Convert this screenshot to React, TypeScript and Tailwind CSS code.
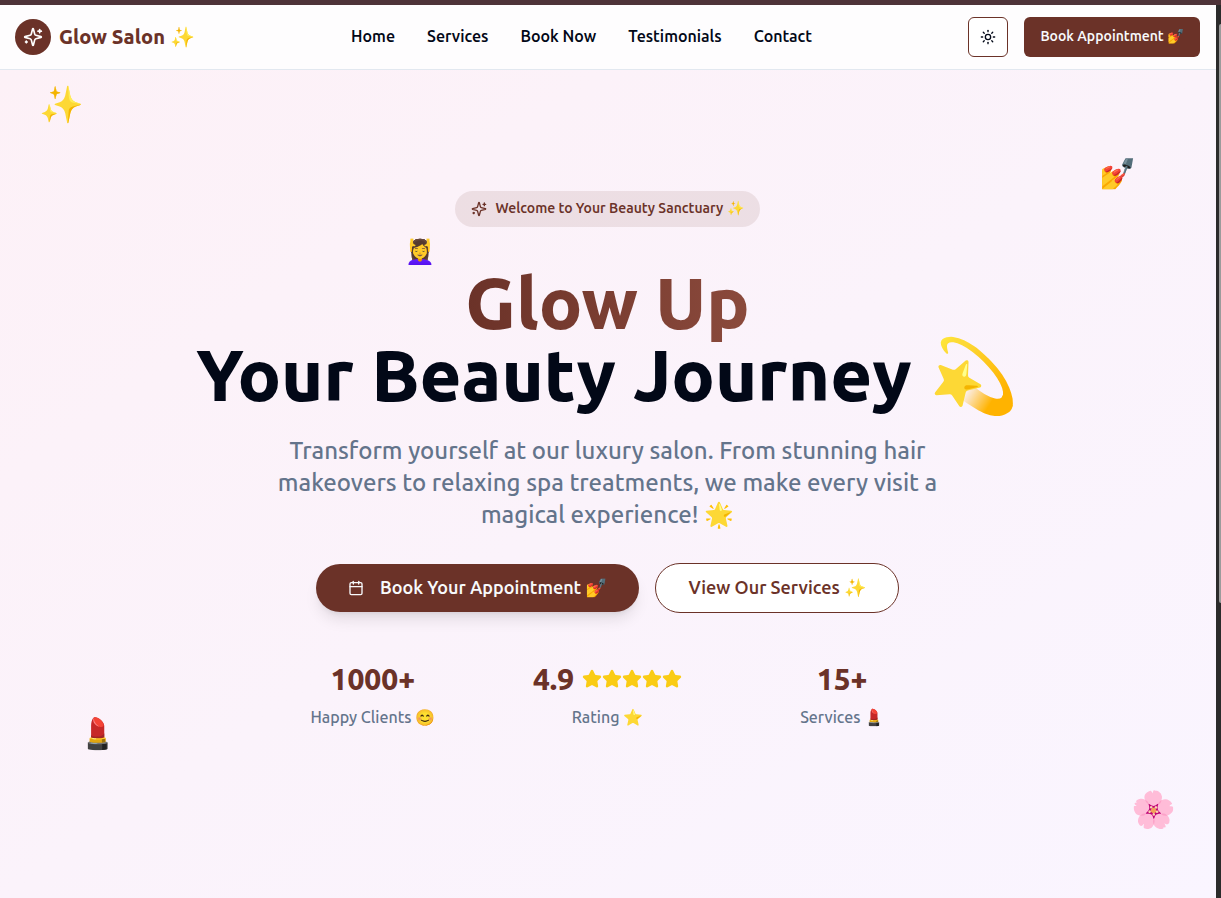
import React from "react";
import { Calendar, Star, Sun } from "lucide-react";

const links = [
  { label: "Home", href: "#home" },
  { label: "Services", href: "#services" },
  { label: "Book Now", href: "#book" },
  { label: "Testimonials", href: "#testimonials" },
  { label: "Contact", href: "#contact" },
];

function SparklesIcon({ className }: { className: string }) {
  return (
    <svg
      className={className}
      viewBox="0 0 24 24"
      fill="none"
      stroke="currentColor"
      strokeWidth="2"
      strokeLinecap="round"
      strokeLinejoin="round"
      aria-hidden="true"
    >
      <path d="M9.937 15.5A2 2 0 0 0 8.5 14.063l-6.135-1.582a.5.5 0 0 1 0-.962L8.5 9.936A2 2 0 0 0 9.937 8.5l1.582-6.135a.5.5 0 0 1 .963 0L14.063 8.5A2 2 0 0 0 15.5 9.937l6.135 1.581a.5.5 0 0 1 0 .964L15.5 14.063a2 2 0 0 0-1.437 1.437l-1.582 6.135a.5.5 0 0 1-.963 0z" />
      <path d="M20 3v4" />
      <path d="M22 5h-4" />
      <path d="M4 17v2" />
      <path d="M5 18H3" />
    </svg>
  );
}

function Header() {
  return (
    <header className="flex h-[65px] items-center justify-between border-b border-[#e2e8f0] bg-[#fefdfe] pr-4 pl-[15px]">
      <a href="#home" className="flex items-center gap-2">
        <span className="flex size-9 items-center justify-center rounded-full bg-[#6b3228] text-white">
          <SparklesIcon className="size-5" />
        </span>
        <span className="text-xl font-extrabold text-[#6b3228]">Glow Salon ✨</span>
      </a>
      <nav className="flex items-center gap-8 font-['Ubuntu_Sans','Noto_Sans',sans-serif]">
        {links.map((link) => (
          <a key={link.label} href={link.href} className="font-semibold text-[#020817]">
            {link.label}
          </a>
        ))}
      </nav>
      <div className="flex items-center gap-4 font-['Ubuntu_Sans','Noto_Sans',sans-serif]">
        <button
          type="button"
          aria-label="Toggle theme"
          className="flex size-10 items-center justify-center rounded-md border border-[#6b3228] bg-white text-[#020817]"
        >
          <Sun className="size-4" />
        </button>
        <button type="button" className="h-10 rounded-md bg-[#6b3228] px-4 text-sm font-semibold text-[#f8fafc]">
          Book Appointment 💅
        </button>
      </div>
    </header>
  );
}

function FloatingEmojis() {
  return (
    <div aria-hidden="true" className="pointer-events-none">
      <span className="absolute top-[14px] left-[39px] text-4xl">✨</span>
      <span className="absolute top-[85px] right-20 text-3xl">💅</span>
      <span className="absolute top-[166px] left-[405px] text-2xl">💆‍♀️</span>
      <span className="absolute bottom-[147px] left-[79px] text-3xl">💄</span>
      <span className="absolute right-10 bottom-[69px] text-4xl">🌸</span>
    </div>
  );
}

function Stat({ value, label, children }: { value: string; label: string; children?: React.ReactNode }) {
  return (
    <div className="text-center">
      <div className="mb-2 flex items-center justify-center gap-2 text-3xl font-extrabold text-[#6b3228]">
        {value}
        {children}
      </div>
      <div className="font-medium text-[#64748b]">{label}</div>
    </div>
  );
}

function Hero() {
  return (
    <section
      id="home"
      className="relative flex flex-1 flex-col items-center bg-linear-to-br from-[#fdf1f7] via-[#fbf3fb] to-[#faf5ff] pt-[121px] pr-4 pl-[15px] pb-24 text-center"
    >
      <FloatingEmojis />
      <div className="mb-10 flex items-center gap-2 rounded-full bg-[#6b3228]/10 px-4 py-2 font-['Ubuntu_Sans','Noto_Sans',sans-serif] text-sm font-semibold text-[#6b3228]">
        <SparklesIcon className="size-4" />
        <span>Welcome to Your Beauty Sanctuary ✨</span>
      </div>
      <h1 className="mb-6 text-7xl leading-[72px] font-extrabold text-[#020817]">
        <span className="bg-linear-to-r from-[#6b3228] to-[#8b4a3c] bg-clip-text text-transparent">Glow Up</span>
        <br />
        Your Beauty Journey 💫
      </h1>
      <p className="mb-8 max-w-2xl text-2xl leading-8 font-medium text-[#64748b]">
        Transform yourself at our luxury salon. From stunning hair makeovers to relaxing spa treatments, we make every
        visit a magical experience! 🌟
      </p>
      <div className="mb-12 flex items-center justify-center gap-4 font-['Ubuntu_Sans','Noto_Sans',sans-serif]">
        <button
          type="button"
          className="flex h-12 items-center gap-4 rounded-full bg-[#6b3228] px-8 text-lg font-semibold text-[#f8fafc] shadow-lg"
        >
          <Calendar className="size-4" />
          Book Your Appointment 💅
        </button>
        <button
          type="button"
          className="h-[50px] rounded-full border border-[#6b3228] bg-white px-8 text-lg font-semibold text-[#6b3228]"
        >
          View Our Services ✨
        </button>
      </div>
      <div className="grid w-full max-w-2xl grid-cols-3 gap-8">
        <Stat value="1000+" label="Happy Clients 😊" />
        <Stat value="4.9" label="Rating ⭐">
          <span className="flex">
            {[1, 2, 3, 4, 5].map((n) => (
              <Star key={n} className="size-5 fill-[#facc15] text-[#facc15]" />
            ))}
          </span>
        </Stat>
        <Stat value="15+" label="Services 💄" />
      </div>
    </section>
  );
}

export default function App() {
  return (
    <div className="flex min-h-screen flex-col font-['Ubuntu','Noto_Sans',sans-serif]">
      <div className="h-[5px] bg-[#4e3339]" />
      <div className="flex flex-1">
        <div className="flex flex-1 flex-col">
          <Header />
          <Hero />
        </div>
        <div className="flex w-[5px] flex-col items-end bg-[#2b2b2b] pt-[19px]">
          <div className="h-[579px] w-[2px] rounded-l-full bg-[#9b9b9b]" />
        </div>
      </div>
    </div>
  );
}
